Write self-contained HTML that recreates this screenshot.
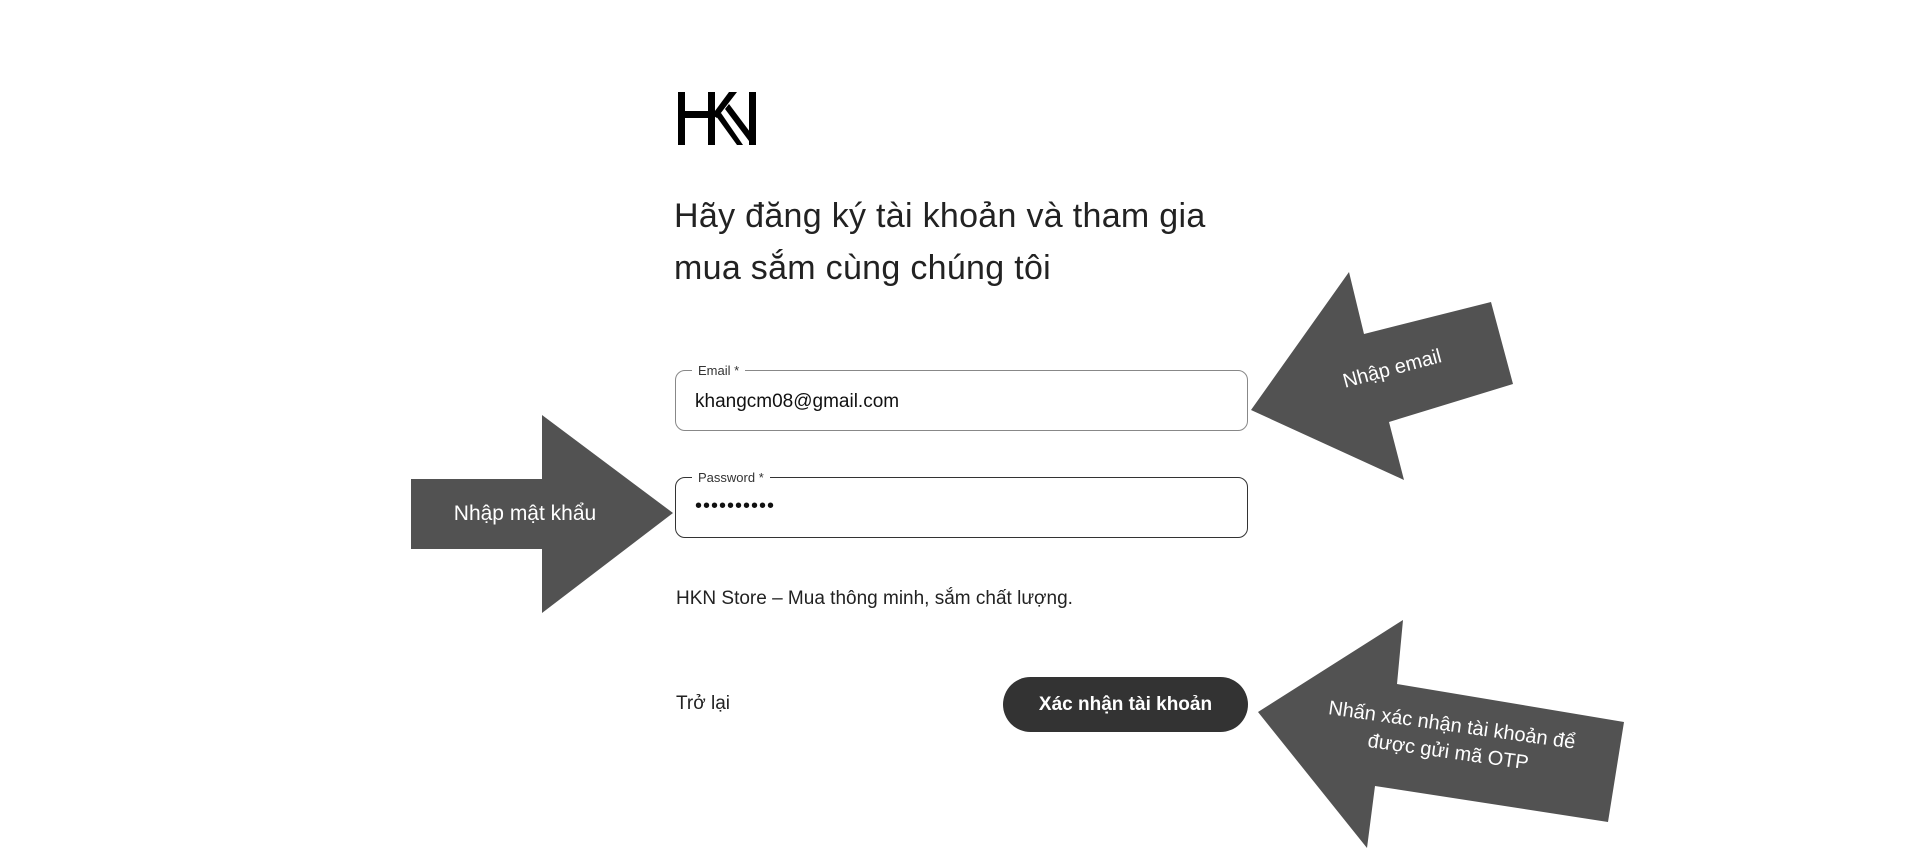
<!DOCTYPE html>
<html><head><meta charset="utf-8"><style>
body{margin:0;width:1919px;height:865px;background:#fff;position:relative;overflow:hidden;font-family:"Segoe UI","Liberation Sans","Noto Sans CJK SC",sans-serif;color:#222}
.a{position:absolute}
h1{position:absolute;left:674px;top:190px;margin:0;font-weight:400;font-size:34px;line-height:52px;color:#222;letter-spacing:0.3px}
.box{position:absolute;left:675px;width:573px;height:61px;border:1px solid #888;border-radius:10px;box-sizing:border-box}
.lbl{position:absolute;left:16px;top:-8px;background:#fff;padding:0 6px;font-size:13px;color:#333}
.val{position:absolute;left:19px;top:20px;font-size:19px;color:#111}
.btn{position:absolute;left:1003px;top:677px;width:245px;height:55px;border-radius:28px;background:#333;color:#fff;font-weight:700;font-size:19px;text-align:center;line-height:55px}
.t{fill:#fff;font-family:"Liberation Sans",sans-serif}
</style></head><body>
<svg class="a" style="left:0;top:0" width="1919" height="865">
<g fill="#000">
<rect x="678" y="92" width="7" height="53"/>
<rect x="708" y="92" width="7" height="53"/>
<rect x="678" y="111" width="37" height="7"/>
<polygon points="729,92 737,92 717,118 712,115"/>
<polygon points="716,116 721,113 743,145 737,145"/>
<polygon points="725,109 729,104 756,140 756,145 752,145"/>
<rect x="749" y="92" width="7" height="53"/>
</g>
<g transform="translate(-1,-1)">
<g fill="#525252">
<polygon points="412,480 543,480 543,416 674,514 543,614 543,550 412,550"/>
</g>
<text class="t" x="526" y="521" font-size="21" text-anchor="middle">Nhập mật khẩu</text>
</g>
<g transform="translate(-5,-1)">
<g fill="#525252">
<polygon points="1256,411 1354,273 1369,335 1496,303 1518,385 1394,423 1409,481"/>
<polygon points="1263,713 1408,621 1402,685 1629,723 1613,823 1380,787 1372,849"/>
</g>
<text class="t" x="1397" y="376" font-size="20" text-anchor="middle" transform="rotate(-15 1397 369)">Nhập email</text>
<g transform="rotate(8 1460 740)">
<text class="t" x="1455" y="733" font-size="20" text-anchor="middle">Nhấn xác nhận tài khoản để</text>
<text class="t" x="1455" y="760" font-size="20" text-anchor="middle">được gửi mã OTP</text>
</g>
</g>
</svg>
<h1>Hãy đăng ký tài khoản và tham gia<br>mua sắm cùng chúng tôi</h1>
<div class="box" style="top:370px"><span class="lbl">Email *</span><span class="val">khangcm08@gmail.com</span></div>
<div class="box" style="top:477px;border-color:#333"><span class="lbl">Password *</span><span class="val" style="top:17px;letter-spacing:1px;font-size:20px">••••••••••</span></div>
<div class="a" style="left:676px;top:588px;font-size:19px">HKN Store – Mua thông minh, sắm chất lượng.</div>
<div class="a" style="left:676px;top:693px;font-size:19px">Trở lại</div>
<div class="btn">Xác nhận tài khoản</div>
</body></html>
